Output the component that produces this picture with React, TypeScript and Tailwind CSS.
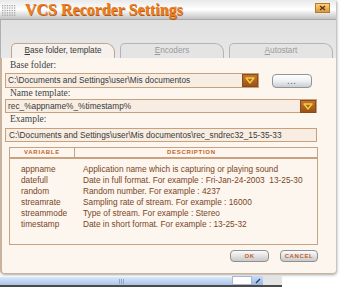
import React from "react";

const sans = "font-['Liberation_Sans',Arial,sans-serif]";
const serif = "font-['Liberation_Serif','Times_New_Roman',serif]";

function DropBtn() {
  return (
    <div className="w-[16px] h-[13px] bg-gradient-to-b from-[#c2772f] to-[#9c5218] border border-[#8a4a1a] flex items-center justify-center">
      <svg width="10" height="7" viewBox="0 0 10 7">
        <path d="M1 1 L9 1 L5 6 Z" fill="none" stroke="#f6cc3c" strokeWidth="1.4" strokeLinejoin="round" />
      </svg>
    </div>
  );
}

function Tab({ first, rest, active }: { first: string; rest: string; active?: boolean }) {
  return (
    <div
      className={`w-[104px] h-[15px] rounded-tl-[5px] rounded-tr-[9px] border border-b-0 flex items-center justify-center ${
        active ? "bg-[#f6f1ec] border-[#b9a796] text-[#3a3a3a]" : "bg-[#e4e4e4] border-[#b4b4b4] text-[#9a9a9a]"
      } ${sans} text-[8.2px]`}
    >
      <span className="mt-[1px]">
        <span className="underline">{first}</span>
        {rest}
      </span>
    </div>
  );
}

function GlossBtn({ children, w }: { children: React.ReactNode; w: string }) {
  return (
    <div
      className={`${w} h-[12px] rounded-[4px] border border-[#8f8f8f] bg-gradient-to-b from-[#fbfbfb] via-[#e2e2e2] to-[#c9c9c9] flex items-center justify-center ${sans} text-[6px] font-bold tracking-[0.6px] text-[#c0602a]`}
    >
      {children}
    </div>
  );
}

const rows: [string, string][] = [
  ["appname", "Application name which is capturing or playing sound"],
  ["datefull", "Date in full format. For example : Fri-Jan-24-2003  13-25-30"],
  ["random", "Random number. For example : 4237"],
  ["streamrate", "Sampling rate of stream. For example : 16000"],
  ["streammode", "Type of stream. For example : Stereo"],
  ["timestamp", "Date in short format. For example : 13-25-32"],
];

export default function App() {
  return (
    <div className="w-[340px] h-[287px] bg-white overflow-hidden flex flex-col">
      {/* window */}
      <div className="w-[336px] h-[274px] flex flex-col rounded-bl-[4px] rounded-br-[4px] shadow-[1px_1px_3px_rgba(0,0,0,0.35)]">
        {/* title bar */}
        <div className="h-[20px] flex items-center bg-gradient-to-b from-[#e9e9e9] via-[#ffffff] to-[#c3c3c3] border-b border-[#a9a9a9]">
          <svg width="16" height="14" viewBox="0 0 16 14" className="ml-[1px]">
            {[0, 1, 2, 3, 4].map((r) =>
              [0, 1, 2, 3, 4, 5].map((c) => (
                <rect key={`${r}-${c}`} x={1 + c * 2.4} y={2 + r * 2.4} width="1.3" height="1.3" fill="#a8a8a8" />
              ))
            )}
          </svg>
          <span className={`ml-[8px] ${serif} font-bold text-[16px] leading-none text-[#f07c1a] [text-shadow:0.6px_0.6px_0_#a85a18]`}>
            VCS Recorder Settings
          </span>
          <div className="ml-auto mr-[6px] mb-[4px] w-[15px] h-[10px] bg-gradient-to-b from-[#f9d27c] to-[#dc9a3a] border border-[#b47a2c] flex items-center justify-center">
            <svg width="7" height="6" viewBox="0 0 7 6">
              <path d="M1 1 L6 5 M6 1 L1 5" stroke="#6a3410" strokeWidth="1.5" />
            </svg>
          </div>
        </div>

        {/* tab band */}
        <div className="h-[38px] bg-gradient-to-b from-[#e0e0e0] to-[#e8e8e8] flex items-end pl-[10px] gap-[5px] border-l border-[#b0b0b0]">
          <Tab first="B" rest="ase folder, template" active />
          <Tab first="E" rest="ncoders" />
          <Tab first="A" rest="utostart" />
        </div>

        {/* content */}
        <div className="flex-1 bg-[#fdf6ee] border-l-2 border-b border-[#c7b3a0] rounded-bl-[4px] rounded-br-[4px] flex flex-col pl-[3px] pr-[18px] pt-[2px]">
          <div className={`h-[11px] leading-[11px] pl-[5px] ${serif} text-[9.5px] text-[#444]`}>Base folder:</div>
          <div className="mt-[2px] h-[15px] flex items-center">
            <div className={`w-[254px] h-[15px] bg-[#f8ede2] border border-[#c8a17c] flex items-center pl-[2px] ${sans} text-[8.3px] text-[#3a3a3a]`}>
              <span className="flex-1">C:\Documents and Settings\user\Mis documentos</span>
              <DropBtn />
            </div>
            <div className="ml-[13px] w-[40px] h-[14px] rounded-[4px] border border-[#8f959b] bg-gradient-to-b from-[#ffffff] via-[#eef0f2] to-[#c9ced3] flex items-center justify-center text-[8px] text-[#444] tracking-[1px]">
              ...
            </div>
          </div>
          <div className={`h-[11px] leading-[11px] pl-[5px] ${serif} text-[9.5px] text-[#444]`}>Name template:</div>
          <div className={`w-[312px] h-[14px] bg-[#f8ede2] border border-[#c8a17c] flex items-center pl-[2px] ${sans} text-[8.3px] text-[#3a3a3a]`}>
            <span className="flex-1">rec_%appname%_%timestamp%</span>
            <DropBtn />
          </div>
          <div className={`mt-[1px] h-[11px] leading-[11px] pl-[5px] ${serif} text-[9.5px] text-[#444]`}>Example:</div>
          <div className={`mt-[3px] w-[312px] h-[14px] bg-[#f8ede2] border border-[#c8a17c] flex items-center pl-[3px] ${sans} text-[8.3px] text-[#3a3a3a]`}>
            C:\Documents and Settings\user\Mis documentos\rec_sndrec32_15-35-33
          </div>

          {/* table */}
          <div className="mt-[5px] ml-[4px] w-[309px] h-[98px] border border-[#c8a383] flex flex-col">
            <div className={`h-[11px] flex border-b-2 border-double border-[#c8a383] ${sans} text-[6px] font-bold tracking-[0.7px] text-[#c0652c]`}>
              <div className="w-[65px] border-r border-[#c8a383] flex items-center justify-center">VARIABLE</div>
              <div className="flex-1 flex items-center pl-[92px]">DESCRIPTION</div>
            </div>
            <div className={`mt-[5px] flex flex-col ${sans} text-[8.3px] text-[#7a4526]`}>
              {rows.map(([v, d]) => (
                <div key={v} className="h-[11px] leading-[11px] flex">
                  <div className="w-[73px] pl-[11px]">{v}</div>
                  <div className="whitespace-pre">{d}</div>
                </div>
              ))}
            </div>
          </div>

          <div className="mt-[5px] flex justify-end gap-[11px]">
            <GlossBtn w="w-[39px]">OK</GlossBtn>
            <GlossBtn w="w-[38px]">CANCEL</GlossBtn>
          </div>
        </div>
      </div>

      {/* window behind */}
      <div className="mt-[2px] h-[9px] w-[282px] flex">
        <div className="w-[232px] bg-gradient-to-b from-[#dbe8f8] to-[#a9c6ea] border-t border-[#f2f7fd] flex justify-center items-center">
          <div className="ml-[10px] flex gap-[1px]">
            <div className="w-[1px] h-[5px] bg-[#8aa6c8]" />
            <div className="w-[1px] h-[5px] bg-[#8aa6c8]" />
            <div className="w-[1px] h-[5px] bg-[#8aa6c8]" />
          </div>
        </div>
        <div className="w-[20px] bg-white border border-[#a8b8cc]" />
        <div className="w-[11px] bg-gradient-to-b from-[#c9dbf3] to-[#98b8e2] flex items-center justify-center">
          <svg width="6" height="6" viewBox="0 0 6 6">
            <path d="M1 5 L5 1" stroke="#1c3a6a" strokeWidth="1.2" />
          </svg>
        </div>
        <div className="flex-1 bg-[#e4e4e4]" />
      </div>
      <div className="h-[2px] w-[282px] bg-[#4a4a4a]" />
    </div>
  );
}
